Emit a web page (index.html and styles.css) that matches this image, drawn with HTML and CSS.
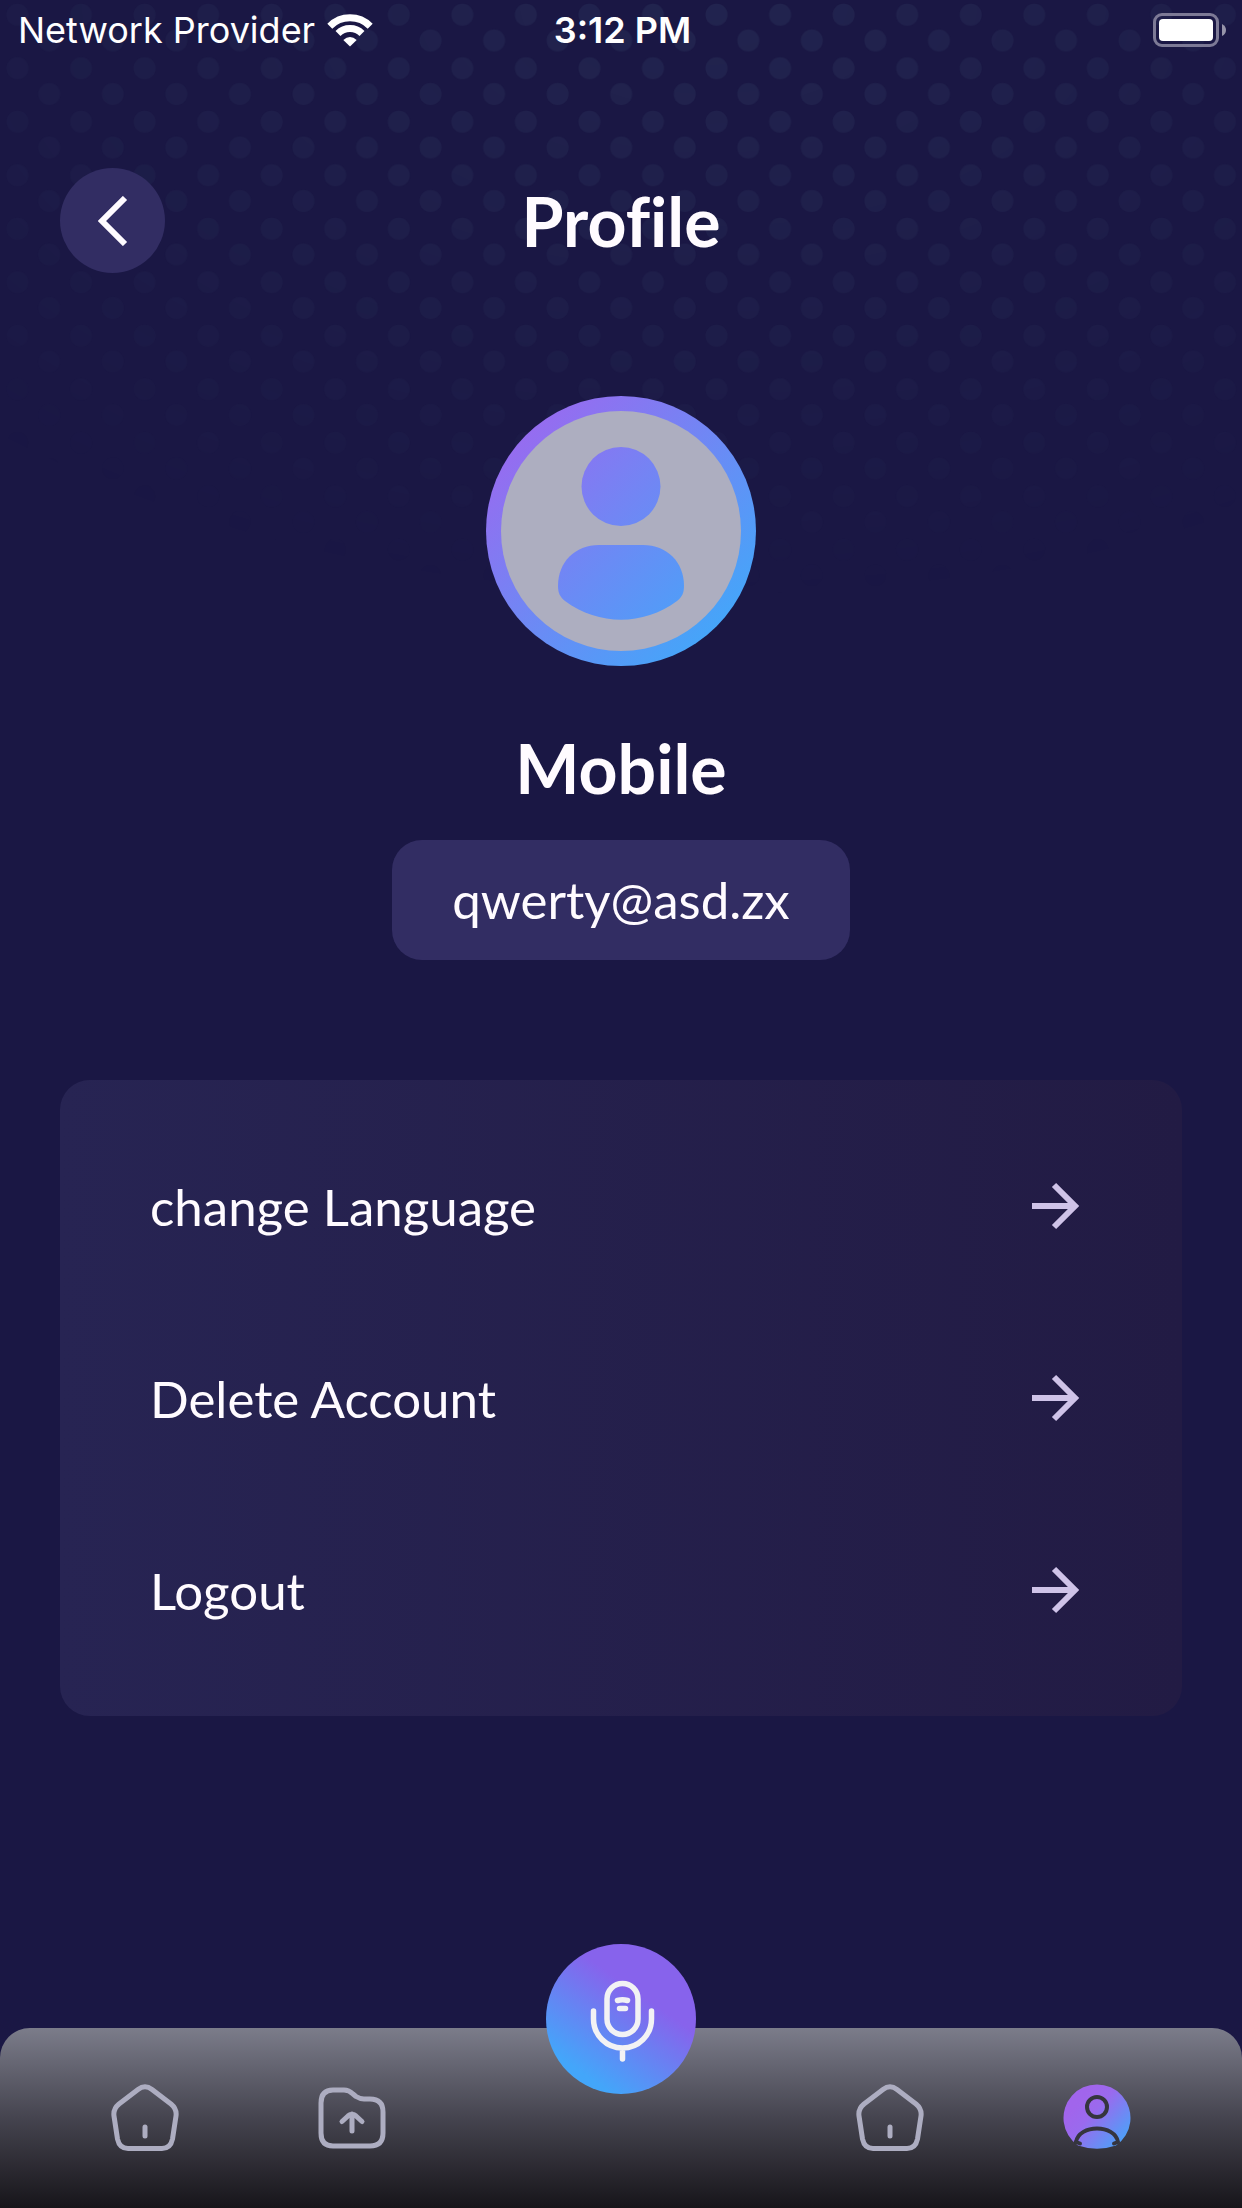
FILE: index.html
```html
<!DOCTYPE html>
<html lang="en">
<head>
  <meta charset="UTF-8">
  <meta name="viewport" content="width=device-width, initial-scale=1.0">
  <title>Profile</title>
  <link rel="stylesheet" href="styles.css">
</head>
<body>
  <!-- Dotted backdrop, fades out from the top -->
  <svg class="dots" viewBox="0 0 2484 1200" aria-hidden="true">
    <defs>
      <pattern id="dot-grid" width="127.1" height="107" patternUnits="userSpaceOnUse">
        <circle cx="35" cy="29.5" r="22" fill="#466080"/>
        <circle cx="98.5" cy="81" r="22" fill="#466080"/>
      </pattern>
      <radialGradient id="dot-fade" gradientUnits="userSpaceOnUse" cx="1420" cy="0" r="1" gradientTransform="translate(1420 0) scale(2100 1200) translate(-1420 0)">
        <stop offset="0" stop-color="#fff" stop-opacity=".18"/>
        <stop offset=".5" stop-color="#fff" stop-opacity=".1"/>
        <stop offset="1" stop-color="#fff" stop-opacity="0"/>
      </radialGradient>
      <mask id="dot-mask" style="mask-type: alpha">
        <rect width="2484" height="1200" fill="url(#dot-fade)"/>
      </mask>
    </defs>
    <rect width="2484" height="1200" fill="url(#dot-grid)" mask="url(#dot-mask)"/>
  </svg>

  <div class="status-bar">
    <div class="carrier">
      <span>Network Provider</span>
      <svg class="wifi" width="46" height="34" viewBox="0 0 46 34" fill="none" stroke="#fff" stroke-width="7">
        <path d="M2.800 13.200A28.500 28.500 0 0 1 43.200 13.200"/>
        <path d="M11 20.500A17 17 0 0 1 35 20.500"/>
        <path d="M23 33.500L16.300 27Q23 21 29.700 27Z" fill="#fff" stroke="none"/>
      </svg>
    </div>
    <div class="time">3:12 PM</div>
    <svg class="battery" width="74" height="34" viewBox="0 0 74 34">
      <rect x="1.500" y="1.500" width="63" height="31" rx="7.500" fill="none" stroke="#7d7a96" stroke-width="3"/>
      <rect x="6" y="6" width="54" height="22" rx="4" fill="#fff"/>
      <path d="M69 11Q73 13 73 17T69 23Z" fill="#9694a9"/>
    </svg>
  </div>

  <header class="header">
    <button class="back" type="button" aria-label="Back">
      <svg width="30" height="50" viewBox="0 0 30 50" fill="none" stroke="#fffbff" stroke-width="6">
        <path d="M27 2L4 25L27 48"/>
      </svg>
    </button>
    <h1>Profile</h1>
  </header>

  <main class="content">
    <svg class="avatar" viewBox="0 0 270 270" role="img" aria-label="Avatar">
      <defs>
        <linearGradient id="avatar-fill" gradientUnits="userSpaceOnUse" x1="38" y1="38" x2="232" y2="232">
          <stop offset="0" stop-color="#966cf0"/>
          <stop offset="1" stop-color="#45a5f9"/>
        </linearGradient>
      </defs>
      <circle cx="135" cy="135" r="135" fill="url(#avatar-fill)"/>
      <circle cx="135" cy="135" r="120" fill="#adaec0"/>
      <circle cx="135" cy="90.500" r="39.500" fill="url(#avatar-fill)"/>
      <path fill="url(#avatar-fill)" d="M113 149H157C181 149 198 166 198 190C198 197 196 201 191 205C157 230 113 230 79 205C74 201 72 197 72 190C72 166 89 149 113 149Z"/>
    </svg>
    <h2>Mobile</h2>
    <p class="email">qwerty@asd.zx</p>

    <div class="menu">
      <button class="menu-item" type="button">
        <span>change Language</span>
        <svg class="arrow" viewBox="0 0 48 48"><path d="M0 24H43M22 3L43 24L22 45"/></svg>
      </button>
      <button class="menu-item" type="button">
        <span>Delete Account</span>
        <svg class="arrow" viewBox="0 0 48 48"><path d="M0 24H43M22 3L43 24L22 45"/></svg>
      </button>
      <button class="menu-item" type="button">
        <span>Logout</span>
        <svg class="arrow" viewBox="0 0 48 48"><path d="M0 24H43M22 3L43 24L22 45"/></svg>
      </button>
    </div>
  </main>

  <nav class="tab-bar">
    <a href="#home" class="tab" aria-label="Home">
      <svg viewBox="0 0 72 72">
        <path d="M29 7.500Q36 2 43 7.500L62 22Q68 27 67 34L63.500 57Q61.500 66.500 53 66.500H19Q10.500 66.500 8.500 57L5 34Q4 27 10 22Z"/>
        <path d="M36 45V54"/>
      </svg>
    </a>
    <a href="#files" class="tab" aria-label="Files">
      <svg viewBox="0 0 72 72">
        <path d="M17 8H28Q33 8 37 12L40 14.500Q44 17 48 17H54Q67 17 67 30V51Q67 64 54 64H17Q5 64 5 51V21Q5 8 17 8Z"/>
        <path d="M36 49V32M26 39.500L32 34Q36 30.500 40 34L46 39.500"/>
      </svg>
    </a>
    <button class="mic" type="button" aria-label="Record">
      <svg width="70" height="90" viewBox="0 0 70 90" fill="none" stroke="#f2f2f4" stroke-width="5.500" stroke-linecap="round">
        <rect x="21" y="9.500" width="31" height="51" rx="15.500"/>
        <path d="M7.500 37V45A29 29 0 0 0 65.500 45V37M36.500 74V85"/>
        <path d="M31.500 26.500Q36.500 25 41.500 26.500M33.500 34.500H39.500"/>
      </svg>
    </button>
    <a href="#library" class="tab tab-right" aria-label="Library">
      <svg viewBox="0 0 72 72">
        <path d="M29 7.500Q36 2 43 7.500L62 22Q68 27 67 34L63.500 57Q61.500 66.500 53 66.500H19Q10.500 66.500 8.500 57L5 34Q4 27 10 22Z"/>
        <path d="M36 45V54"/>
      </svg>
    </a>
    <a href="#profile" class="tab" aria-label="Profile">
      <svg viewBox="0 0 72 72">
        <defs>
          <linearGradient id="profile-fill" x1="0.200" y1="0.300" x2="0.900" y2="0.900">
            <stop offset="0" stop-color="#a165ec"/>
            <stop offset=".3" stop-color="#9a6aee"/>
            <stop offset="1" stop-color="#4ba2f8"/>
          </linearGradient>
        </defs>
        <path class="solid" fill="url(#profile-fill)" d="M17 63.500A33.500 33.500 0 1 1 55 63.500Q36 70 17 63.500Z"/>
        <circle class="cutout" cx="36" cy="25" r="10"/>
        <path class="cutout" d="M15 60C18 42 54 42 57 60L53 61.500"/>
        <path class="cutout" d="M15 60L19 61.500"/>
      </svg>
    </a>
  </nav>
</body>
</html>
```

FILE: styles.css
```css
* {
  box-sizing: border-box;
}

body {
  position: relative;
  display: flex;
  flex-direction: column;
  min-height: 100vh;
  margin: 0;
  background-color: #1a1744;
  color: #fffbff;
  font-family: 'Lato', sans-serif;
}

button {
  padding: 0;
  border: none;
  background: none;
  color: inherit;
  font: inherit;
  cursor: pointer;
}

h1, h2, p {
  margin: 0;
}

h1, h2 {
  font-size: 68px;
  font-weight: bold;
  line-height: 84px;
  font-variant-ligatures: none;
}

svg {
  display: block;
}

.dots {
  position: absolute;
  top: 0;
  left: 0;
  width: 100%;
  z-index: -1;
}

/* Status bar */
.status-bar {
  display: grid;
  grid-template-columns: 1fr auto 1fr;
  align-items: center;
  height: 60px;
  padding: 0 15px 0 18px;
  color: #fff;
  font-family: 'Inter', sans-serif;
  font-size: 36px;
}

.carrier {
  display: flex;
  align-items: center;
  gap: 12px;
}

.time {
  font-weight: 600;
}

.battery {
  justify-self: end;
}

/* Header */
.header {
  display: grid;
  grid-template-columns: 105px 1fr 105px;
  align-items: center;
  margin-top: 108px;
  padding: 0 60px;
}

.header h1 {
  text-align: center;
}

.back {
  display: flex;
  align-items: center;
  justify-content: center;
  height: 105px;
  border-radius: 50%;
  background-color: #322d63;
}

/* Profile */
.content {
  display: flex;
  flex-direction: column;
  align-items: center;
  padding: 123px 60px 120px;
}

.avatar {
  width: 270px;
  height: 270px;
}

.content h2 {
  margin-top: 60px;
}

.email {
  margin-top: 30px;
  padding: 30px 60px;
  border-radius: 30px;
  background-color: #322d63;
  font-size: 51px;
  line-height: 60px;
}

.menu {
  width: 100%;
  margin-top: 120px;
  padding: 30px 102px 30px 90px;
  border-radius: 30px;
  background: linear-gradient(to right, #272453, #221b44);
}

.menu-item {
  display: flex;
  align-items: center;
  justify-content: space-between;
  width: 100%;
  height: 192px;
  font-size: 51px;
}

.arrow {
  width: 48px;
  height: 48px;
  fill: none;
  stroke: #cfc3e8;
  stroke-width: 6;
}

/* Bottom tabs */
.tab-bar {
  position: relative;
  display: grid;
  grid-template-columns: 5fr 5fr 8fr 5fr 5fr;
  align-items: center;
  height: 180px;
  margin-top: auto;
  padding: 0 42px;
  border-radius: 30px 30px 0 0;
  background: linear-gradient(#7b7c8a, #45444f 50%, #17151a);
}

.tab {
  justify-self: center;
}

.tab-right {
  grid-column: 4;
}

.tab svg {
  width: 72px;
  height: 72px;
  fill: none;
  stroke: #adadc1;
  stroke-width: 5;
  stroke-linecap: round;
  stroke-linejoin: round;
}

.tab .solid {
  stroke: none;
}

.tab .cutout {
  stroke: #35353e;
  stroke-width: 4;
}

.mic {
  position: absolute;
  top: -84px;
  left: 50%;
  display: flex;
  align-items: center;
  justify-content: center;
  width: 150px;
  height: 150px;
  border-radius: 50%;
  background: linear-gradient(35deg, #43a6fa 18%, #8763ec 65%);
  transform: translateX(-50%);
}
```
